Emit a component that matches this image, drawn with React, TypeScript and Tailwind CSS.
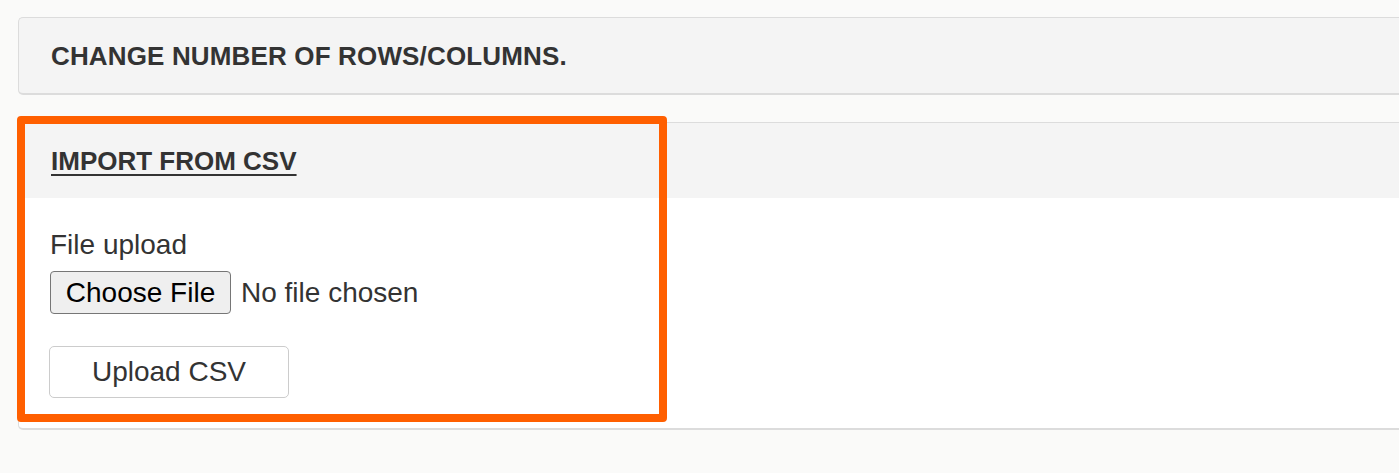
import React from "react";

export default function App() {
  return (
    <div
      className="relative w-[1399px] h-[473px] overflow-hidden bg-[#fafaf9] text-[#333]"
      style={{ fontFamily: '"Liberation Sans", Arial, sans-serif' }}
    >
      <div className="pt-[17px] pl-[18px]">
        <div className="w-[1400px] h-[78px] bg-[#f4f4f4] border border-r-0 border-[#dcdcdc] border-b-2 rounded-l-[5px] flex items-center pl-[32px]">
          <span className="text-[26px] leading-[30px] font-bold tracking-[0.15px] text-[#333]">
            CHANGE NUMBER OF ROWS/COLUMNS.
          </span>
        </div>

        <div className="mt-[27px] w-[1400px] border border-r-0 border-[#dcdcdc] border-b-2 rounded-l-[5px] bg-white">
          <div className="h-[75px] bg-[#f4f4f4] flex items-center pl-[32px]">
            <span className="text-[26px] leading-[30px] font-bold underline underline-offset-[4px] decoration-[2px] tracking-[0px] text-[#333]">
              IMPORT FROM CSV
            </span>
          </div>
          <div className="h-[230px] pl-[31px] pt-[32px]">
            <div className="text-[28px] leading-[30px] text-[#333]">File upload</div>
            <div className="mt-[11px] flex items-center">
              <div className="h-[43px] w-[181px] rounded-[4px] border border-[#767676] bg-[#efefef] flex items-center justify-center text-[28px] text-black">
                Choose File
              </div>
              <span className="ml-[10px] text-[28px] text-[#333]">No file chosen</span>
            </div>
            <div className="mt-[32px] ml-[-1px] h-[52px] w-[240px] rounded-[5px] border border-[#cccccc] bg-white flex items-center justify-center text-[28px] text-[#333]">
              Upload CSV
            </div>
          </div>
        </div>
      </div>

      <div className="absolute left-[17px] top-[116px] w-[650px] h-[306px] border-[8px] border-[#ff5f00] rounded-[4px]" />
    </div>
  );
}
